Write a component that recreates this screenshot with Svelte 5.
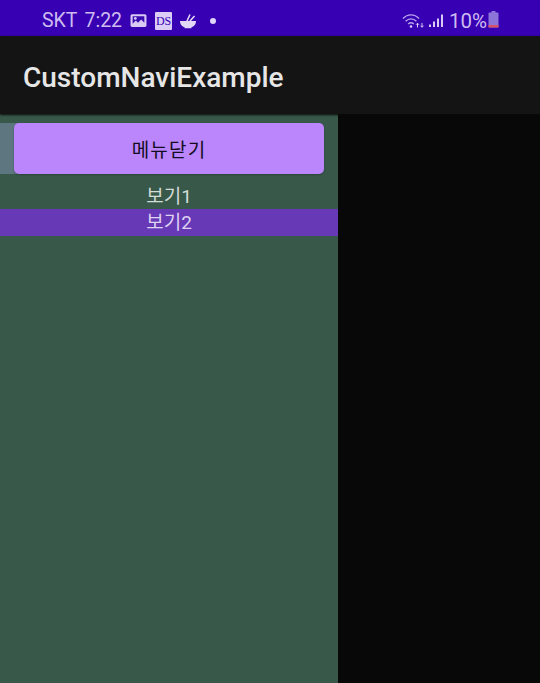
<script>
  const items = [
    { label: '보기1', selected: false },
    { label: '보기2', selected: true }
  ];
</script>

<div class="screen">
  <header class="status">
    <div class="left">
      <span class="carrier">SKT</span>
      <span class="time">7:22</span>
      <svg class="ic" width="17" height="15" viewBox="0 0 16 14">
        <rect x="0.500" y="1" width="15" height="12" rx="1.500" fill="#d9c9f5"/>
        <path d="M2.500 3h11v6l-3-3-3 3-2-2-3 3z" fill="#3a0ab0"/>
        <circle cx="5" cy="5" r="1.300" fill="#d9c9f5"/>
      </svg>
      <span class="ds">DS</span>
      <svg class="ic bowl" width="18" height="16" viewBox="0 0 18 16">
        <path d="M1 8h16c0 3.600-2.400 5.600-4.600 6.200v1H5.600v-1C3.400 13.600 1 11.600 1 8z" fill="#e4d8f8"/>
        <path d="M8 8 11 1.500M11 8l4.500-5" stroke="#e4d8f8" stroke-width="1.600" fill="none"/>
      </svg>
      <span class="dot"></span>
    </div>
    <div class="right">
      <svg width="24" height="17" viewBox="0 0 24 16">
        <path d="M1 6c4.600-4.800 11.400-4.800 16 0M3.600 8.800c3.200-3.200 7.600-3.200 10.800 0M6.200 11.400c1.800-1.600 3.800-1.600 5.600 0" stroke="#b9a5ec" stroke-width="1.400" fill="none"/>
        <circle cx="9" cy="14" r="1.300" fill="#d9c9f5"/>
        <path d="M15.500 15v-4M14 12.300l1.500-1.600 1.500 1.600M20 10.500v4M18.500 13.200l1.500 1.600 1.500-1.600" stroke="#d9c9f5" stroke-width="1" fill="none"/>
      </svg>
      <svg class="signal" width="16" height="15" viewBox="0 0 16 14">
        <rect x="1" y="11" width="2" height="2.500" fill="#d9c9f5"/>
        <rect x="5" y="8" width="2" height="5.500" fill="#d9c9f5"/>
        <rect x="9" y="5" width="2" height="8.500" fill="#d9c9f5"/>
        <rect x="13" y="1" width="2" height="12.500" fill="#d9c9f5"/>
      </svg>
      <span class="pct">10%</span>
      <svg class="batt" width="11" height="17" viewBox="0 0 11 17">
        <rect x="3.500" y="0" width="4" height="2" fill="#8d74d8"/>
        <rect x="0.500" y="1.500" width="10" height="15" rx="1" fill="#8d74d8"/>
        <rect x="0.500" y="14" width="10" height="2.500" fill="#d8506a"/>
      </svg>
    </div>
  </header>

  <div class="appbar">CustomNaviExample</div>

  <main class="body">
    <nav class="panel">
      <div class="button-row">
        <span class="under"></span>
        <button class="close">메뉴닫기</button>
      </div>
      <ul class="list">
        {#each items as item}
          <li class:selected={item.selected}>{item.label}</li>
        {/each}
      </ul>
    </nav>
    <div class="rest"></div>
  </main>
</div>

<style>
  :global(body) {
    margin: 0;
    background: #080808;
  }
  .screen {
    width: 540px;
    height: 683px;
    display: flex;
    flex-direction: column;
    overflow: hidden;
    font-family: Roboto, "Noto Sans CJK KR", sans-serif;
  }
  .status {
    height: 36px;
    flex: none;
    box-sizing: border-box;
    padding: 5px 41px 0 42px;
    display: flex;
    align-items: center;
    justify-content: space-between;
    background: #3700b3;
    color: #cdbcf0;
    font-size: 19.500px;
  }
  .left, .right {
    display: flex;
    align-items: center;
  }
  .carrier { margin-right: 7px; }
  .time { margin-right: 8px; }
  .ds {
    width: 17px;
    height: 18px;
    margin-right: 7px;
    background: #dccdf7;
    color: #3700b3;
    border-radius: 1px;
    font: 12px/18px "Liberation Serif", serif;
    text-align: center;
  }
  .ic { margin-right: 8px; }
  .bowl { margin-right: 13px; }
  .dot {
    width: 6px;
    height: 6px;
    border-radius: 50%;
    background: #e0d4f8;
  }
  .signal { margin: 0 5px 0 2px; }
  .pct { margin-right: 1px; font-size: 20.500px; }
  .batt { margin-bottom: 2px; }
  .appbar {
    height: 78px;
    flex: none;
    box-sizing: border-box;
    padding: 4px 23px 0;
    display: flex;
    align-items: center;
    background: #141414;
    color: #e6e6e6;
    font-size: 28px;
    font-weight: 500;
    box-shadow: 0 1px 2px #0a0a0a;
    position: relative;
  }
  .body {
    flex: 1;
    display: flex;
    min-height: 0;
  }
  .panel {
    width: 338px;
    flex: none;
    background: #38594a;
    padding-top: 9px;
  }
  .button-row {
    position: relative;
    height: 51px;
    padding: 0 14px;
  }
  .under {
    position: absolute;
    left: -6px;
    top: 0;
    width: 40px;
    height: 51px;
    border-radius: 5px;
    background: #5d7680;
  }
  .close {
    position: relative;
    display: block;
    width: 310px;
    height: 51px;
    padding: 0;
    border: none;
    border-radius: 5px;
    background: #bb86fc;
    color: #120c20;
    font: 400 19px Roboto, "Noto Sans CJK KR", sans-serif;
    letter-spacing: 1.200px;
    box-shadow: 0 1px 2px rgba(0, 0, 0, 0.25);
  }
  .list {
    list-style: none;
    margin: 9px 0 0;
    padding: 0;
  }
  .list li {
    height: 26px;
    line-height: 27px;
    text-align: center;
    color: #d3dcd6;
    font-size: 19px;
  }
  .list li.selected {
    height: 27px;
    background: #6739b6;
    color: #dfd3f2;
  }
  .rest {
    flex: 1;
    background: #080808;
  }
</style>
